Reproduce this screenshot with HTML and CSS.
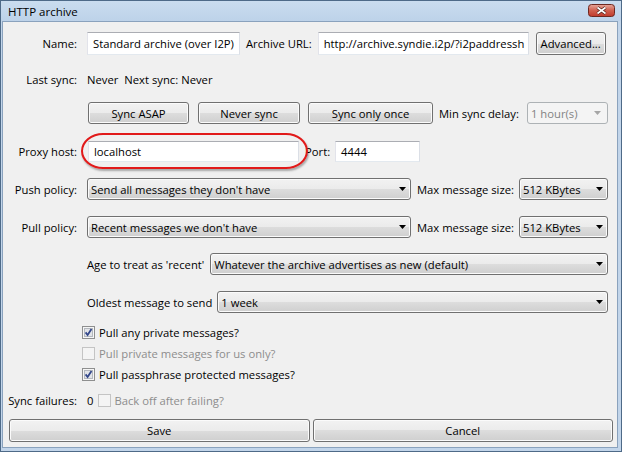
FILE: index.html
```html
<!DOCTYPE html>
<html lang="en">
<head>
    <meta charset="UTF-8">
    <title>HTTP archive</title>
    <link rel="stylesheet" href="styles.css">
</head>
<body>
    <div class="window">
        <div class="titlebar">
            <span class="title">HTTP archive</span>
            <span class="close-btn">
                <svg width="27" height="13" viewBox="0 0 27 13">
                    <defs>
                        <linearGradient id="closeGrad" x1="0" y1="0" x2="0" y2="1">
                            <stop offset="0" stop-color="#e6a89c"/>
                            <stop offset="0.5" stop-color="#d0604f"/>
                            <stop offset="1" stop-color="#c0392b"/>
                        </linearGradient>
                    </defs>
                    <rect x="0.5" y="0.5" width="26" height="12" rx="3" fill="url(#closeGrad)" stroke="#6e2820"/>
                    <path d="M9.5 3.5l8 6M17.5 3.5l-8 6" stroke="#4a1a14" stroke-width="3.2"/>
                    <path d="M9.5 3.5l8 6M17.5 3.5l-8 6" stroke="#fff" stroke-width="1.7"/>
                </svg>
            </span>
        </div>

        <div class="client">
            <div class="row row-name">
                <span class="lbl">Name:</span>
                <div class="field name-field">Standard archive (over I2P)</div>
                <span class="txt url-lbl">Archive URL:</span>
                <div class="field url-field">http://archive.syndie.i2p/?i2paddressh</div>
                <button class="btn adv-btn">Advanced...</button>
            </div>

            <div class="row row-sync">
                <span class="lbl">Last sync:</span>
                <span class="txt">Never</span>
                <span class="txt next-lbl">Next sync:</span>
                <span class="txt next-val">Never</span>
            </div>

            <div class="row row-btns">
                <button class="btn sync-asap">Sync ASAP</button>
                <button class="btn never-sync">Never sync</button>
                <button class="btn sync-once">Sync only once</button>
                <span class="txt delay-lbl">Min sync delay:</span>
                <div class="combo disabled delay-combo">1 hour(s)</div>
            </div>

            <div class="row row-proxy">
                <span class="lbl">Proxy host:</span>
                <div class="field proxy-field">localhost</div>
                <span class="txt port-lbl">Port:</span>
                <div class="field port-field">4444</div>
                <div class="highlight"></div>
            </div>

            <div class="row row-push">
                <span class="lbl">Push policy:</span>
                <div class="combo policy-combo">Send all messages they don't have</div>
                <span class="txt size-lbl">Max message size:</span>
                <div class="combo size-combo">512 KBytes</div>
            </div>

            <div class="row row-pull">
                <span class="lbl">Pull policy:</span>
                <div class="combo policy-combo">Recent messages we don't have</div>
                <span class="txt size-lbl">Max message size:</span>
                <div class="combo size-combo">512 KBytes</div>
            </div>

            <div class="row row-age">
                <span class="txt">Age to treat as 'recent'</span>
                <div class="combo wide-combo age-combo">Whatever the archive advertises as new (default)</div>
            </div>

            <div class="row row-oldest">
                <span class="txt">Oldest message to send</span>
                <div class="combo wide-combo oldest-combo">1 week</div>
            </div>

            <div class="row row-check first-check">
                <svg class="chk" width="13" height="13" viewBox="0 0 13 13">
                    <rect x="0.5" y="0.5" width="12" height="12" fill="#f6f6f6" stroke="#8e8f8f"/>
                    <rect x="2.5" y="2.5" width="8" height="8" fill="#e2e4e8" stroke="#b4b8be"/>
                    <path d="M3.6 6.4l2 2.6 3.9-6" fill="none" stroke="#33478a" stroke-width="1.8"/>
                </svg>
                <span class="txt">Pull any private messages?</span>
            </div>

            <div class="row row-check">
                <svg class="chk" width="13" height="13" viewBox="0 0 13 13">
                    <rect x="0.5" y="0.5" width="12" height="12" fill="#f4f4f4" stroke="#c4c4c4"/>
                </svg>
                <span class="txt dis">Pull private messages for us only?</span>
            </div>

            <div class="row row-check">
                <svg class="chk" width="13" height="13" viewBox="0 0 13 13">
                    <rect x="0.5" y="0.5" width="12" height="12" fill="#f6f6f6" stroke="#8e8f8f"/>
                    <rect x="2.5" y="2.5" width="8" height="8" fill="#e2e4e8" stroke="#b4b8be"/>
                    <path d="M3.6 6.4l2 2.6 3.9-6" fill="none" stroke="#33478a" stroke-width="1.8"/>
                </svg>
                <span class="txt">Pull passphrase protected messages?</span>
            </div>

            <div class="row row-fail">
                <span class="lbl">Sync failures:</span>
                <span class="txt">0</span>
                <svg class="chk fail-chk" width="13" height="13" viewBox="0 0 13 13">
                    <rect x="0.5" y="0.5" width="12" height="12" fill="#f4f4f4" stroke="#c4c4c4"/>
                </svg>
                <span class="txt dis">Back off after failing?</span>
            </div>

            <div class="row row-actions">
                <button class="btn">Save</button>
                <button class="btn">Cancel</button>
            </div>
        </div>
    </div>
</body>
</html>
```

FILE: styles.css
```css
* {
    box-sizing: border-box;
}

body {
    margin: 0;
    background: #fff;
    font-family: "Open Sans", sans-serif;
    font-size: 11.25px;
    color: #000;
}

.window {
    width: 622px;
    height: 452px;
    border: 1px solid #4e6a88;
    background: #c2d5ea;
    padding: 0 3px 3px 1px;
    display: flex;
    flex-direction: column;
    overflow: hidden;
}

.titlebar {
    height: 20px;
    flex: none;
    position: relative;
    display: flex;
    align-items: center;
    background: linear-gradient(#cadcef, #bdd2e9);
    margin: 0 -3px 0 -1px;
    padding-left: 7px;
}

.title {
    font-size: 11.5px;
}

.close-btn {
    position: absolute;
    right: 6px;
    top: 3px;
    height: 13px;
}

.close-btn svg {
    display: block;
}

.client {
    flex: 1;
    border: 1px solid #8aa2bd;
    background: #f0f0f0;
}

.row {
    display: flex;
    align-items: center;
    padding-right: 9px;
    white-space: nowrap;
}

.lbl {
    width: 74px;
    flex: none;
    text-align: right;
    margin-right: 10px;
}

.txt {
    flex: none;
}

.dis {
    color: #8d8d8d;
}

/* inputs */
.field {
    height: 100%;
    background: #fff;
    border: 1px solid;
    border-color: #abadb3 #dbdfe6 #e3e9ef #e2e3ea;
    padding-left: 5px;
    display: flex;
    align-items: center;
    overflow: hidden;
    flex: none;
}

.btn {
    font: inherit;
    color: #000;
    height: 100%;
    padding: 0;
    border: 1px solid #707070;
    border-radius: 3px;
    background: linear-gradient(#f2f2f2 0%, #ebebeb 50%, #dddddd 50%, #cfcfcf 100%);
    box-shadow: inset 0 0 0 1px #fbfbfb;
    display: flex;
    align-items: center;
    justify-content: center;
    flex: none;
}

.combo {
    position: relative;
    height: 100%;
    border: 1px solid #707070;
    border-radius: 3px;
    background: linear-gradient(#f2f2f2 0%, #ebebeb 50%, #dddddd 50%, #cfcfcf 100%);
    box-shadow: inset 0 0 0 1px #fbfbfb;
    padding-left: 3px;
    display: flex;
    align-items: center;
    overflow: hidden;
    flex: none;
}

.combo::after {
    content: "";
    position: absolute;
    right: 4px;
    top: 50%;
    margin-top: -2px;
    width: 7px;
    height: 4px;
    background: #000;
    clip-path: polygon(0 0, 100% 0, 50% 100%);
}

.combo.disabled {
    border-color: #adb2b5;
    background: #f4f4f4;
    box-shadow: none;
    color: #838383;
}

.combo.disabled::after {
    background: #a6a6a6;
    right: 6px;
}

/* rows */
.row-name {
    margin-top: 10px;
    height: 23px;
}

.name-field {
    width: 153px;
}

.url-lbl {
    margin-left: 6px;
}

.url-field {
    width: 211px;
    margin-left: 6px;
}

.adv-btn {
    width: 70px;
    margin-left: 7px;
}

.row-sync {
    margin-top: 13px;
    height: 22px;
}

.next-lbl {
    margin-left: 6px;
}

.next-val {
    margin-left: 3px;
}

.row-btns {
    margin-top: 12px;
    height: 22px;
    padding-left: 85px;
}

.sync-asap {
    width: 101px;
}

.never-sync {
    width: 102px;
    margin-left: 9px;
}

.sync-once {
    width: 125px;
    margin-left: 8px;
}

.delay-lbl {
    margin-left: 6px;
}

.delay-combo {
    width: 81px;
    margin-left: auto;
}

.row-proxy {
    margin-top: 17px;
    height: 21px;
    position: relative;
}

.row-proxy .lbl {
    margin-right: 11px;
}

.proxy-field {
    width: 211px;
}

.port-lbl {
    margin-left: 6px;
}

.port-field {
    width: 85px;
    margin-left: 5px;
}

.highlight {
    position: absolute;
    left: 78px;
    top: -8px;
    width: 227px;
    height: 36px;
    border: 2px solid #e11a1a;
    border-radius: 22px / 18px;
    box-shadow: 1px 2px 2px rgba(0, 0, 0, 0.3);
}

.row-push,
.row-pull {
    margin-top: 16px;
    height: 22px;
}

.policy-combo {
    width: 324px;
}

.size-lbl {
    margin-left: 6px;
}

.size-combo {
    width: 89px;
    margin-left: auto;
}

.row-age {
    margin-top: 15px;
    height: 22px;
    padding-left: 84px;
}

.row-oldest {
    margin-top: 16px;
    height: 22px;
    padding-left: 84px;
}

.wide-combo {
    flex: 1;
}

.age-combo {
    margin-left: 6px;
}

.oldest-combo {
    margin-left: 5px;
}

.row-check {
    height: 16px;
    margin-top: 5px;
    padding-left: 79px;
}

.row-check.first-check {
    margin-top: 11px;
}

.chk {
    flex: none;
    margin-right: 4px;
    display: block;
}

.row-fail {
    margin-top: 10px;
    height: 16px;
}

.fail-chk {
    margin-left: 5px;
    margin-right: 3px;
}

.row-actions {
    margin-top: 11px;
    height: 23px;
    padding: 0 4px 0 6px;
    gap: 3px;
}

.row-actions .btn {
    flex: 1;
}
```
